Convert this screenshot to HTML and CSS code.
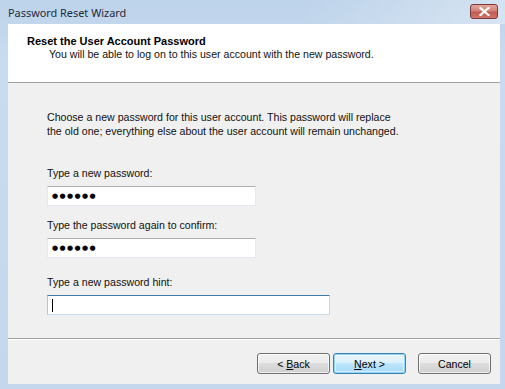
FILE: index.html
```html
<!DOCTYPE html>
<html>
<head>
<meta charset="utf-8">
<link rel="stylesheet" href="styles.css">
</head>
<body>
<div class="window">
  <div class="titlebar">
    <span class="title">Password Reset Wizard</span>
    <div class="close">
      <svg width="11" height="9" viewBox="0 0 11 9"><path d="M1.5 1 L9.5 8 M9.5 1 L1.5 8" stroke="#fff" stroke-width="2.2" stroke-linecap="square"/></svg>
    </div>
  </div>
  <div class="client">
    <div class="header">
      <div class="h-title">Reset the User Account Password</div>
      <div class="h-sub">You will be able to log on to this user account with the new password.</div>
    </div>
    <div class="content">
      <p class="intro">Choose a new password for this user account. This password will replace<br>the old one; everything else about the user account will remain unchanged.</p>
      <div class="field first">
        <div class="label">Type a new password:</div>
        <div class="box short"><span class="dots">●●●●●●</span></div>
      </div>
      <div class="field">
        <div class="label">Type the password again to confirm:</div>
        <div class="box short"><span class="dots">●●●●●●</span></div>
      </div>
      <div class="field hint">
        <div class="label">Type a new password hint:</div>
        <div class="box long focus"><span class="caret"></span></div>
      </div>
    </div>
    <div class="footer">
      <div class="btn"><span>&lt; <u>B</u>ack</span></div>
      <div class="btn default"><span><u>N</u>ext &gt;</span></div>
      <div class="btn cancel"><span>Cancel</span></div>
    </div>
  </div>
</div>
</body>
</html>
```

FILE: styles.css
```css
html, body {
  margin: 0;
  padding: 0;
}
body {
  width: 505px;
  height: 389px;
  overflow: hidden;
  font-family: "Liberation Sans", Arial, sans-serif;
  font-size: 10.6px;
  color: #111;
}
.window {
  width: 505px;
  height: 389px;
  box-sizing: border-box;
  display: flex;
  flex-direction: column;
  background: linear-gradient(to bottom, #bdd3ea 0px, #c9dbef 60px, #c4d7ec 389px);
  padding: 0 5px 5px 8px;
}
.titlebar {
  height: 24px;
  box-sizing: border-box;
  display: flex;
  align-items: center;
  justify-content: space-between;
  background: linear-gradient(to right, rgba(255,255,255,0) 60%, rgba(255,255,255,0.35) 100%);
  margin: 0 -5px 0 -8px;
  padding: 0 7px 0 8px;
}
.title {
  font-family: "Noto Sans", "Open Sans", sans-serif;
  font-size: 10.9px;
  color: #1e2a38;
  padding-top: 1px;
}
.close {
  width: 26px;
  height: 13px;
  border: 1px solid #7b3a3a;
  border-radius: 3px;
  background: linear-gradient(to bottom, #e3a79c 0%, #d2837a 45%, #c25a50 55%, #cf756b 100%);
  display: flex;
  align-items: center;
  justify-content: center;
  margin-top: -2px;
}
.client {
  flex: 1;
  display: flex;
  flex-direction: column;
  background: #f0f0f0;
}
.header {
  height: 59px;
  flex: none;
  box-sizing: border-box;
  background: #fff;
  border-bottom: 1px solid #a0a0a0;
  padding: 11px 0 0 19px;
}
.h-title {
  font-weight: bold;
  font-size: 11px;
  line-height: 13px;
  color: #000;
}
.h-sub {
  padding-left: 22px;
  line-height: 13px;
}
.content {
  flex: 1;
  padding: 27px 0 0 39px;
  border-bottom: 1px solid #a0a0a0;
  box-shadow: 0 1px 0 #fff;
}
.intro {
  margin: 0;
  line-height: 14px;
}
.field {
  margin-top: 13px;
}
.field.first {
  margin-top: 29px;
}
.field.hint {
  margin-top: 18px;
}
.label {
  line-height: 13px;
  margin-bottom: 6px;
}
.box {
  height: 20px;
  box-sizing: border-box;
  background: #fff;
  border: 1px solid #e3e9ef;
  border-top-color: #abadb3;
  display: flex;
  align-items: center;
  padding-left: 4px;
}
.box.short { width: 209px; }
.box.long { width: 283px; }
.box.focus {
  border-color: #c5dbec;
  border-top-color: #3d7bad;
  border-left-color: #a9c9e2;
}
.dots {
  font-family: "DejaVu Sans", sans-serif;
  font-size: 7px;
  letter-spacing: 1.4px;
  line-height: 18px;
  color: #000;
}
.caret {
  width: 1px;
  height: 13px;
  background: #000;
}
.footer {
  height: 45px;
  flex: none;
  box-sizing: border-box;
  display: flex;
  align-items: flex-start;
  padding: 14px 0 0 249px;
}
.btn {
  width: 73px;
  height: 21px;
  box-sizing: border-box;
  border: 1px solid #707070;
  border-radius: 3px;
  background: linear-gradient(to bottom, #f2f2f2 0%, #ebebeb 50%, #dddddd 50%, #cfcfcf 100%);
  box-shadow: inset 0 0 0 1px rgba(255,255,255,0.7);
  display: flex;
  align-items: center;
  justify-content: center;
  color: #000;
}
.btn.default {
  margin-left: 3px;
  border-color: #3c7fb1;
  background: linear-gradient(to bottom, #eaf6fd 0%, #d9f0fc 50%, #bee6fd 50%, #a7d9f5 100%);
  box-shadow: inset 0 0 0 1px #8fd3f9, inset 0 0 0 2px rgba(255,255,255,0.5);
}
.btn.cancel {
  margin-left: 12px;
}
```
